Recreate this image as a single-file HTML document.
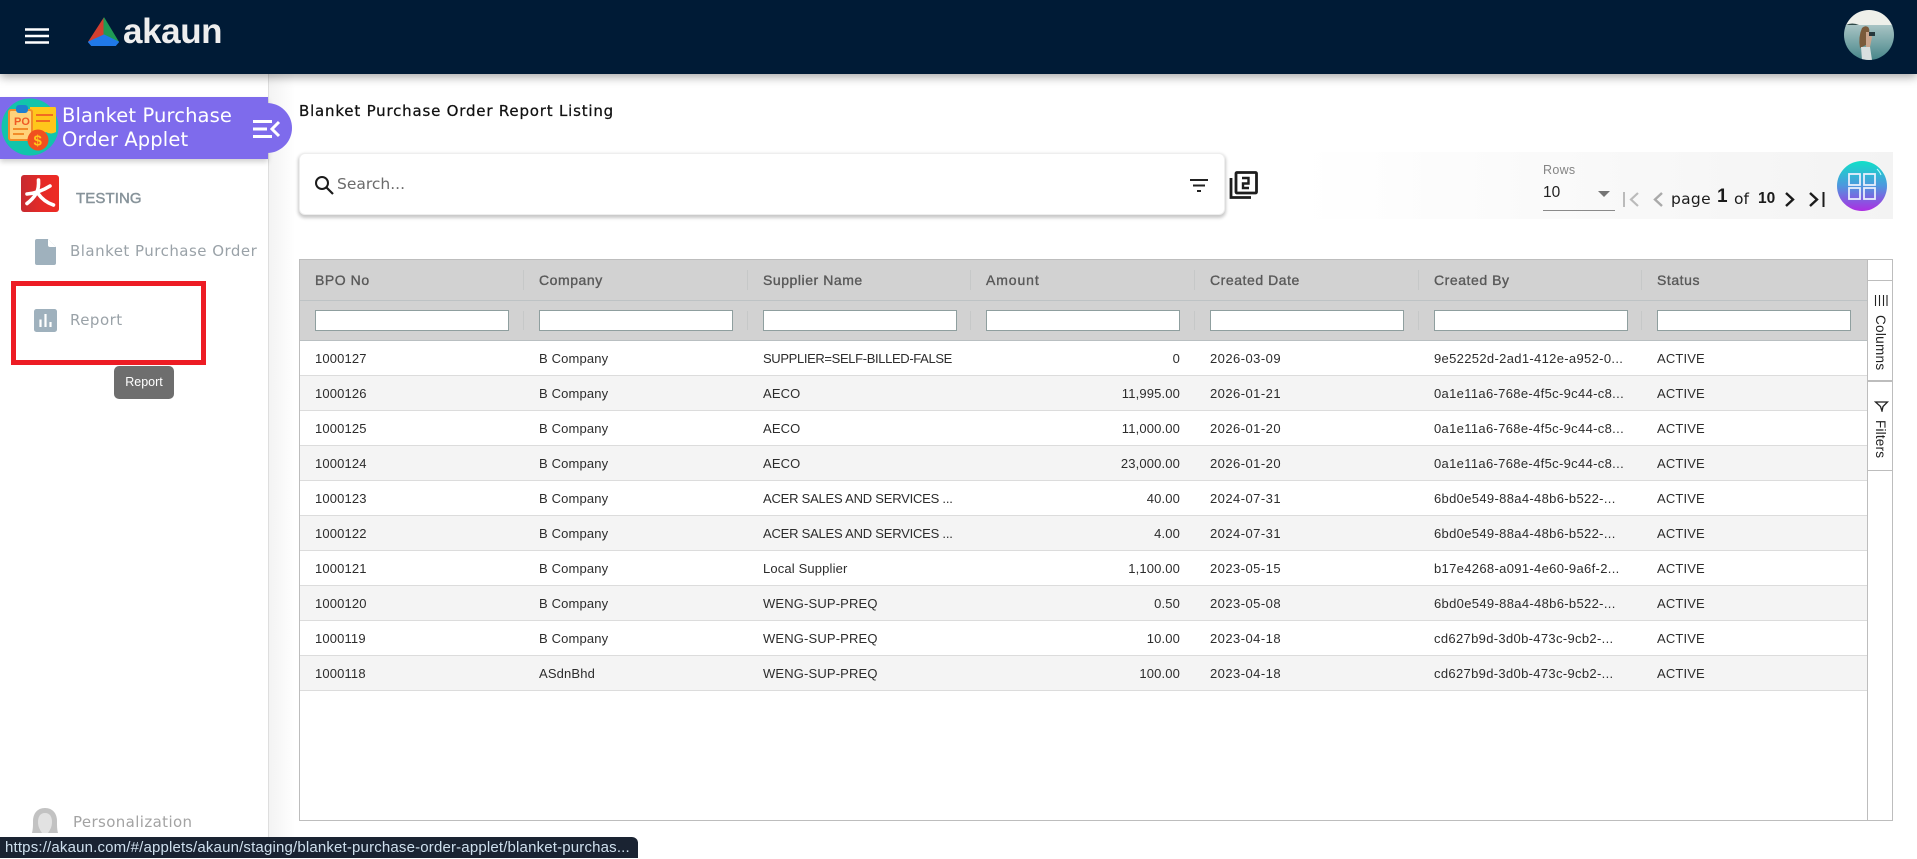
<!DOCTYPE html>
<html lang="en">
<head>
<meta charset="utf-8">
<title>Blanket Purchase Order Report Listing</title>
<style>
*{box-sizing:border-box}
html,body{margin:0;padding:0;width:1917px;height:858px;overflow:hidden;background:#fff;font-family:"Liberation Sans",sans-serif;color:#222}
.a{position:absolute;white-space:nowrap}
.p{font-family:"DejaVu Sans",sans-serif}
svg{position:absolute;display:block}
table{position:absolute;left:300px;top:340px;width:1567px;border-collapse:collapse;table-layout:fixed}
td{height:35px;padding:1px 0 0 15px;font-size:13px;color:#2c2c2c;border-bottom:1.5px solid #dcdcdc;white-space:nowrap;overflow:hidden;letter-spacing:.15px}
tr:nth-child(even) td{background:#f4f4f4}
td.n{text-align:right;padding:1px 15px 0 0}
td.u{letter-spacing:-.22px}
td.d{letter-spacing:.45px}
td.g{letter-spacing:.33px}
.h{font-size:14px;color:#595959;-webkit-text-stroke:.35px #595959;top:272px;line-height:17px;letter-spacing:.55px}
.f{position:absolute;top:310px;width:194px;height:21px;background:#fff;border:1px solid #8f9f9f}
.s{position:absolute;width:1px;background:#c6c8c8}
</style>
</head>
<body>
<!-- shadows / backgrounds -->
<div class="a" style="left:269px;top:74px;width:26px;height:784px;background:linear-gradient(90deg,#f3f3f3,#fff)"></div>
<div class="a" style="left:268px;top:74px;width:1px;height:784px;background:#dedede"></div>

<!-- header -->
<div class="a" style="left:0;top:0;width:1917px;height:74px;background:#001b36;box-shadow:0 3px 9px rgba(0,0,0,.35)"></div>
<svg style="left:25px;top:28px" width="24" height="16"><path d="M0 1.500H24M0 8H24M0 14.500H24" stroke="#fff" stroke-width="2.600"/></svg>
<svg style="left:87px;top:17px" width="33" height="30" viewBox="0 0 33 30">
<path d="M17 1 1.500 25 17 18z" fill="#d33f2f" stroke="#d33f2f" stroke-linejoin="round"/>
<path d="M17 1 31.500 25 17 18z" fill="#1f9a54" stroke="#1f9a54" stroke-linejoin="round"/>
<path d="M17 18 1.500 25 4.500 28.500H28.500L31.500 25z" fill="#2079e8" stroke="#2079e8" stroke-linejoin="round"/>
</svg>
<div class="a" style="left:123px;top:12px;font-size:35px;line-height:40px;font-weight:bold;color:#eeeeee;letter-spacing:-.4px">akaun</div>
<svg style="left:1844px;top:10px" width="50" height="50" viewBox="0 0 50 50">
<defs><clipPath id="av"><circle cx="25" cy="25" r="25"/></clipPath>
<linearGradient id="sea" x1="0" y1="0" x2="0" y2="1"><stop offset="0" stop-color="#a8c4c4"/><stop offset="1" stop-color="#47868a"/></linearGradient></defs>
<g clip-path="url(#av)">
<rect width="50" height="16" fill="#eef0ea"/>
<rect y="15" width="50" height="35" fill="url(#sea)"/>
<path d="M2 15q6-3 13 0z" fill="#2f4a48"/>
<path d="M18 18q3-3 6-1 2 2 1 6l-2 4-1 8-6 3q-2-11 2-20z" fill="#7a5a3a"/>
<path d="M22 22h4l2 5-2 10h-4z" fill="#c9a48c"/>
<path d="M17 37h9l2 13h-10z" fill="#d8dfdf"/>
<path d="M25 22h6v4h-6z" fill="#27383c"/>
</g></svg>

<!-- title -->
<div class="a p" style="left:299px;top:101px;font-size:15px;line-height:20px;color:#111;letter-spacing:.8px;-webkit-text-stroke:.25px #111">Blanket Purchase Order Report Listing</div>

<!-- sidebar banner -->
<div class="a" style="left:0;top:97px;width:268px;height:62px;background:#7e6bec;box-shadow:0 3px 5px rgba(0,0,0,.18)"></div>
<div class="a" style="left:240px;top:103px;width:52px;height:50px;background:#7e6bec;border-radius:0 25px 25px 0"></div>
<svg style="left:0;top:97px" width="60" height="60" viewBox="0 0 60 60">
<circle cx="30" cy="30" r="28.500" fill="#12c4ab"/>
<path d="M30 10h25q1 0 1 2v23q-5 3-10 0-5 3-16 2z" fill="#ffc61b"/>
<path d="M36 18h17M36 24h14" stroke="#f26a21" stroke-width="2"/>
<rect x="9" y="13" width="23" height="30" rx="2" fill="#ffd27a" stroke="#f28c28" stroke-width="2"/>
<rect x="16" y="8" width="12" height="8" rx="3" fill="#1f7fd0"/>
<text x="14" y="28" font-family="Liberation Sans" font-size="11" font-weight="bold" fill="#ef5a24">PO</text>
<path d="M13 32h15M13 37h11" stroke="#f28c28" stroke-width="2"/>
<circle cx="38" cy="43" r="10.500" fill="#f0501f"/>
<text x="33.500" y="48.500" font-family="Liberation Sans" font-size="15" font-weight="bold" fill="#ffc61b">$</text>
</svg>
<div class="a p" style="left:62px;top:104px;font-size:19.500px;line-height:24px;color:#fff;letter-spacing:.12px">Blanket Purchase<br>Order Applet</div>
<svg style="left:252px;top:119px" width="29" height="20" viewBox="0 0 29 20"><path d="M1 2.500H20M1 10H15M1 17.500H20" stroke="#fff" stroke-width="3"/><path d="M27 3 20 10l7 7" fill="none" stroke="#fff" stroke-width="3"/></svg>

<!-- sidebar -->
<svg style="left:21px;top:175px" width="38" height="37" viewBox="0 0 38 37">
<defs><linearGradient id="rd" x1="0" x2="1" y1="0" y2="0"><stop offset="0" stop-color="#c62a30"/><stop offset=".5" stop-color="#e32a28"/><stop offset="1" stop-color="#ee2b24"/></linearGradient></defs>
<rect width="38" height="37" rx="3" fill="url(#rd)"/>
<path d="M17.500 5Q18 13 15.500 18 12 24 6 28.500M17 18.500Q23 27 32.500 30M6 19Q18 18 29 11" fill="none" stroke="#fff" stroke-width="3.600" stroke-linecap="round"/>
</svg>
<div class="a" style="left:76px;top:190px;font-size:15px;line-height:18px;color:#87939a;-webkit-text-stroke:.45px #87939a;letter-spacing:.1px">TESTING</div>
<svg style="left:35px;top:239px" width="21" height="26" viewBox="0 0 21 26"><path d="M2 0H13L21 8V24q0 2-2 2H2q-2 0-2-2V2q0-2 2-2z" fill="#9fb1bd"/><path d="M13 0 21 8H15q-2 0-2-2z" fill="#fff"/></svg>
<div class="a p" style="left:70px;top:241px;font-size:15px;line-height:20px;color:#9aa2a8;letter-spacing:.48px">Blanket Purchase Order</div>
<svg style="left:34px;top:309px" width="23" height="23" viewBox="0 0 23 23"><rect width="23" height="23" rx="2.500" fill="#9fb1bd"/><path d="M6.500 10.500V18M11.500 5V18M16.500 13V18" stroke="#fff" stroke-width="2.200"/></svg>
<div class="a p" style="left:70px;top:310px;font-size:15px;line-height:20px;color:#9aa2a8;letter-spacing:.48px">Report</div>
<div class="a" style="left:11px;top:281px;width:195px;height:84px;border:5px solid #ed1c24"></div>
<div class="a" style="left:114px;top:366px;width:60px;height:33px;background:#6e6e6e;border-radius:5px;color:#fff;font-size:12.500px;line-height:33px;text-align:center">Report</div>

<svg style="left:31px;top:808px" width="28" height="25" viewBox="0 0 28 25"><path d="M14 0C6 0 2 6 2 13c0 5 0 8-1 12h26c-1-4-1-7-1-12C26 6 22 0 14 0z" fill="#c2c2c2"/><path d="M14 5c-5 0-7 4-7 9 0 5 2 8 4 11h6c2-3 4-6 4-11 0-5-2-9-7-9z" fill="#e2e2e2"/></svg>
<div class="a p" style="left:73px;top:812px;font-size:15px;line-height:20px;color:#a3a3a3;letter-spacing:.38px">Personalization</div>

<!-- search -->
<div class="a" style="left:299px;top:153px;width:926px;height:62px;background:#fff;border-radius:6px;border:1px solid #eee;box-shadow:0 2px 3px 1px rgba(0,0,0,.22)"></div>
<svg style="left:314px;top:175px" width="20" height="20" viewBox="0 0 20 20"><circle cx="8" cy="8" r="6" fill="none" stroke="#1b1b1b" stroke-width="2"/><path d="M12.500 12.500 19 19" stroke="#1b1b1b" stroke-width="2.200"/></svg>
<div class="a p" style="left:337px;top:174px;font-size:15.500px;line-height:20px;color:#6b6b6b">Search...</div>
<svg style="left:1190px;top:179px" width="18" height="13" viewBox="0 0 18 13"><path d="M0 1H18M3 6.500H15M7 12H11" stroke="#222" stroke-width="2"/></svg>
<svg style="left:1229px;top:171px" width="29" height="28" viewBox="0 0 29 28"><rect x="7" y="1.500" width="20.500" height="20.500" rx="1" fill="none" stroke="#1d1d1d" stroke-width="2.800"/><path d="M2 7V26.500H22" fill="none" stroke="#1d1d1d" stroke-width="2.800"/><path d="M13 7h6.500v5.500H14v4.500h6" fill="none" stroke="#1d1d1d" stroke-width="2.400"/></svg>

<!-- pagination toolbar -->
<div class="a" style="left:1300px;top:152px;width:593px;height:67px;background:linear-gradient(90deg,#fff 0%,#f3f3f3 100%)"></div>
<div class="a" style="left:1543px;top:163px;font-size:12.500px;line-height:15px;color:#858585;letter-spacing:.3px">Rows</div>
<div class="a" style="left:1543px;top:183px;font-size:15.500px;line-height:19px;color:#222">10</div>
<div class="a" style="left:1543px;top:210px;width:72px;height:1px;background:#8a8a8a"></div>
<svg style="left:1598px;top:191px" width="12" height="6"><path d="M0 0H12L6 6z" fill="#757575"/></svg>
<svg style="left:1622px;top:191px" width="18" height="17" viewBox="0 0 18 17"><path d="M2 1V16" stroke="#bbb" stroke-width="2"/><path d="M16 2 9 8.500 16 15" fill="none" stroke="#bbb" stroke-width="2.200"/></svg>
<svg style="left:1652px;top:191px" width="12" height="17" viewBox="0 0 12 17"><path d="M10 2 3 8.500 10 15" fill="none" stroke="#aaa" stroke-width="2.400"/></svg>
<div class="a p" style="left:1671px;top:189px;font-size:15.500px;line-height:20px;color:#1b1b1b;letter-spacing:.3px">page</div>
<div class="a" style="left:1717px;top:186px;font-size:19px;line-height:22px;font-weight:bold;color:#1b1b1b">1</div>
<div class="a p" style="left:1734px;top:189px;font-size:15.500px;line-height:20px;color:#1b1b1b">of</div>
<div class="a" style="left:1758px;top:189px;font-size:15.500px;line-height:20px;font-weight:bold;color:#1b1b1b">10</div>
<svg style="left:1784px;top:191px" width="11" height="17" viewBox="0 0 11 17"><path d="M2 2 9 8.500 2 15" fill="none" stroke="#1b1b1b" stroke-width="2.400"/></svg>
<svg style="left:1808px;top:191px" width="18" height="17" viewBox="0 0 18 17"><path d="M2 2 9 8.500 2 15" fill="none" stroke="#1b1b1b" stroke-width="2.400"/><path d="M15.500 1V16" stroke="#1b1b1b" stroke-width="2"/></svg>
<svg style="left:1835px;top:159px" width="54" height="54" viewBox="0 0 54 54">
<defs><linearGradient id="gr" x1="0" y1="0" x2="0" y2="1"><stop offset="0" stop-color="#10e0c8"/><stop offset=".5" stop-color="#4f96de"/><stop offset="1" stop-color="#ad2ee2"/></linearGradient></defs>
<circle cx="27" cy="27" r="26.500" fill="#f4f4f4"/>
<circle cx="27" cy="27" r="25" fill="url(#gr)"/>
<path d="M42 10q3 3 4 6" fill="none" stroke="#bff" stroke-width="1"/>
<g fill="none" stroke="#e8eefc" stroke-width="1.800"><rect x="14" y="15" width="11" height="11"/><rect x="29" y="15" width="11" height="11"/><rect x="14" y="29" width="11" height="11"/><rect x="29" y="29" width="11" height="11"/></g>
</svg>

<!-- grid -->
<div class="a" style="left:299px;top:259px;width:1594px;height:562px;border:1px solid #bdbdbd"></div>
<div class="a" style="left:300px;top:260px;width:1567px;height:80px;background:#d2d2d2"></div>
<div class="a" style="left:300px;top:300px;width:1567px;height:1px;background:#bec3c5"></div>

<div class="a h" style="left:315px">BPO No</div>
<div class="a h" style="left:539px">Company</div>
<div class="a h" style="left:763px">Supplier Name</div>
<div class="a h" style="left:986px;letter-spacing:.9px">Amount</div>
<div class="a h" style="left:1210px">Created Date</div>
<div class="a h" style="left:1434px">Created By</div>
<div class="a h" style="left:1657px">Status</div>

<div class="s" style="left:523px;top:270px;height:20px"></div><div class="s" style="left:747px;top:270px;height:20px"></div><div class="s" style="left:970px;top:270px;height:20px"></div><div class="s" style="left:1194px;top:270px;height:20px"></div><div class="s" style="left:1418px;top:270px;height:20px"></div><div class="s" style="left:1641px;top:270px;height:20px"></div>
<div class="s" style="left:523px;top:311px;height:19px"></div><div class="s" style="left:747px;top:311px;height:19px"></div><div class="s" style="left:970px;top:311px;height:19px"></div><div class="s" style="left:1194px;top:311px;height:19px"></div><div class="s" style="left:1418px;top:311px;height:19px"></div><div class="s" style="left:1641px;top:311px;height:19px"></div>

<div class="f" style="left:315px"></div><div class="f" style="left:539px"></div><div class="f" style="left:763px"></div><div class="f" style="left:986px"></div><div class="f" style="left:1210px"></div><div class="f" style="left:1434px"></div><div class="f" style="left:1657px"></div>

<table>
<colgroup><col style="width:224px"><col style="width:224px"><col style="width:223px"><col style="width:224px"><col style="width:224px"><col style="width:223px"><col style="width:225px"></colgroup>
<tr style="border-top:1.500px solid #b9bfc1"><td>1000127</td><td>B Company</td><td class="u" style="letter-spacing:-.36px">SUPPLIER=SELF-BILLED-FALSE</td><td class="n">0</td><td class="d">2026-03-09</td><td class="g">9e52252d-2ad1-412e-a952-0...</td><td>ACTIVE</td></tr>
<tr><td>1000126</td><td>B Company</td><td>AECO</td><td class="n">11,995.00</td><td class="d">2026-01-21</td><td class="g">0a1e11a6-768e-4f5c-9c44-c8...</td><td>ACTIVE</td></tr>
<tr><td>1000125</td><td>B Company</td><td>AECO</td><td class="n">11,000.00</td><td class="d">2026-01-20</td><td class="g">0a1e11a6-768e-4f5c-9c44-c8...</td><td>ACTIVE</td></tr>
<tr><td>1000124</td><td>B Company</td><td>AECO</td><td class="n">23,000.00</td><td class="d">2026-01-20</td><td class="g">0a1e11a6-768e-4f5c-9c44-c8...</td><td>ACTIVE</td></tr>
<tr><td>1000123</td><td>B Company</td><td class="u">ACER SALES AND SERVICES ...</td><td class="n">40.00</td><td class="d">2024-07-31</td><td class="g">6bd0e549-88a4-48b6-b522-...</td><td>ACTIVE</td></tr>
<tr><td>1000122</td><td>B Company</td><td class="u">ACER SALES AND SERVICES ...</td><td class="n">4.00</td><td class="d">2024-07-31</td><td class="g">6bd0e549-88a4-48b6-b522-...</td><td>ACTIVE</td></tr>
<tr><td>1000121</td><td>B Company</td><td>Local Supplier</td><td class="n">1,100.00</td><td class="d">2023-05-15</td><td class="g">b17e4268-a091-4e60-9a6f-2...</td><td>ACTIVE</td></tr>
<tr><td>1000120</td><td>B Company</td><td>WENG-SUP-PREQ</td><td class="n">0.50</td><td class="d">2023-05-08</td><td class="g">6bd0e549-88a4-48b6-b522-...</td><td>ACTIVE</td></tr>
<tr><td>1000119</td><td>B Company</td><td>WENG-SUP-PREQ</td><td class="n">10.00</td><td class="d">2023-04-18</td><td class="g">cd627b9d-3d0b-473c-9cb2-...</td><td>ACTIVE</td></tr>
<tr><td>1000118</td><td>ASdnBhd</td><td>WENG-SUP-PREQ</td><td class="n">100.00</td><td class="d">2023-04-18</td><td class="g">cd627b9d-3d0b-473c-9cb2-...</td><td>ACTIVE</td></tr>
</table>

<!-- side buttons -->
<div class="a" style="left:1867px;top:260px;width:1px;height:561px;background:#bdbdbd"></div>
<div class="a" style="left:1867px;top:280px;width:26px;height:1px;background:#bdbdbd"></div>
<div class="a" style="left:1867px;top:380px;width:26px;height:2px;background:#bdbdbd"></div>
<div class="a" style="left:1867px;top:470px;width:26px;height:1px;background:#bdbdbd"></div>
<svg style="left:1874px;top:295px" width="14" height="11" viewBox="0 0 14 11"><path d="M1.500 0V11M5.500 0V11M9.500 0V11M13 0V11" stroke="#222" stroke-width="1.100"/></svg>
<div class="a" style="left:1871px;top:315px;width:18px;height:58px;writing-mode:vertical-rl;font-size:13.500px;line-height:18px;color:#222;letter-spacing:.3px">Columns</div>
<svg style="left:1874px;top:400px" width="15" height="12" viewBox="0 0 15 12"><path d="M1.500 2H13.500L9 6.500 8 11 6.500 6.500z" fill="none" stroke="#222" stroke-width="1.300"/></svg>
<div class="a" style="left:1871px;top:420px;width:18px;height:40px;writing-mode:vertical-rl;font-size:13.500px;line-height:18px;color:#222;letter-spacing:.2px">Filters</div>

<!-- status bubble -->
<div class="a" style="left:0;top:837px;width:638px;height:21px;background:#1a2332;border-radius:0 6px 0 0;color:#cfe0ee;font-size:15px;line-height:22px;padding-left:5px;letter-spacing:.17px">https://akaun.com/#/applets/akaun/staging/blanket-purchase-order-applet/blanket-purchas...</div>
</body>
</html>
